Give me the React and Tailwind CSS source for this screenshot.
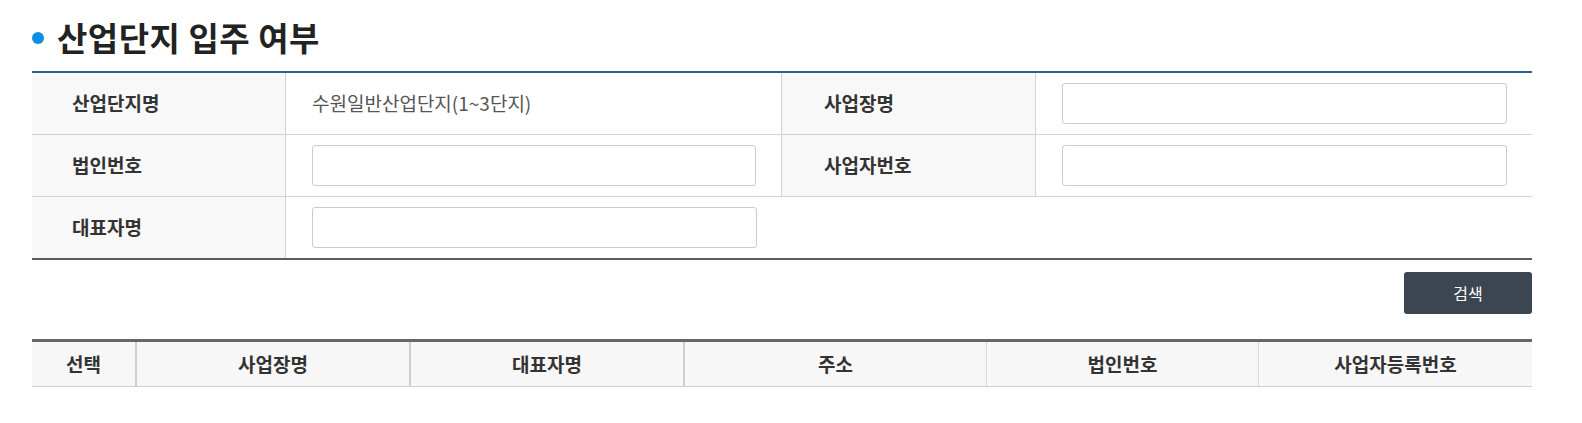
import React from "react";

const Field = () => (
  <input
    type="text"
    className="w-full h-[41px] border border-[#cccccc] rounded-[3px] bg-white px-3 outline-none"
  />
);

const App = () => {
  const cols = [
    { name: "선택", w: "w-[105px]", b: "border-r-2 border-[#cfcfcf]" },
    { name: "사업장명", w: "w-[274px]", b: "border-r-2 border-[#cfcfcf]" },
    { name: "대표자명", w: "w-[274px]", b: "border-r-2 border-[#cfcfcf]" },
    { name: "주소", w: "w-[302px]", b: "border-r border-[#dcdcdc]" },
    { name: "법인번호", w: "w-[272px]", b: "border-r border-[#dcdcdc]" },
    { name: "사업자등록번호", w: "flex-1", b: "" },
  ];

  return (
    <div
      className="bg-white w-full pl-[32px] pr-[50px] pt-[14px] pb-[20px] text-[#333]"
      style={{ fontFamily: '"Noto Sans CJK KR", "Noto Sans", sans-serif' }}
    >
      <h2 className="flex items-center h-[47px] text-[33px] font-bold text-[#222] tracking-[0.5px]">
        <span className="w-[12px] h-[12px] rounded-full bg-[#0d8ee0] mr-[13px]"></span>
        산업단지 입주 여부
      </h2>

      <div className="mt-[10px] border-t-2 border-[#2d5f8f] border-b-2 border-b-[#5c5c5c] text-[19px]">
        <div className="flex h-[62px] border-b border-[#d2d2d2]">
          <div className="w-[254px] bg-[#f8f8f8] border-r border-[#d2d2d2] pl-[40px] flex items-center font-semibold">
            산업단지명
          </div>
          <div className="w-[496px] border-r border-[#d2d2d2] pl-[26px] flex items-center text-[#555] font-normal">
            수원일반산업단지(1~3단지)
          </div>
          <div className="w-[254px] bg-[#f8f8f8] border-r border-[#d2d2d2] pl-[42px] flex items-center font-semibold">
            사업장명
          </div>
          <div className="flex-1 pl-[26px] pr-[25px] flex items-center">
            <Field />
          </div>
        </div>
        <div className="flex h-[62px] border-b border-[#d2d2d2]">
          <div className="w-[254px] bg-[#f8f8f8] border-r border-[#d2d2d2] pl-[40px] flex items-center font-semibold">
            법인번호
          </div>
          <div className="w-[496px] border-r border-[#d2d2d2] pl-[26px] pr-[25px] flex items-center">
            <Field />
          </div>
          <div className="w-[254px] bg-[#f8f8f8] border-r border-[#d2d2d2] pl-[42px] flex items-center font-semibold">
            사업자번호
          </div>
          <div className="flex-1 pl-[26px] pr-[25px] flex items-center">
            <Field />
          </div>
        </div>
        <div className="flex h-[61px]">
          <div className="w-[254px] bg-[#f8f8f8] border-r border-[#d2d2d2] pl-[40px] flex items-center font-semibold">
            대표자명
          </div>
          <div className="w-[496px] pl-[26px] pr-[25px] flex items-center">
            <Field />
          </div>
          <div className="flex-1"></div>
        </div>
      </div>

      <div className="flex justify-end mt-[12px]">
        <button className="w-[128px] h-[42px] bg-[#3b4651] rounded-[3px] text-white text-[16px]">
          검색
        </button>
      </div>

      <div className="mt-[25px] border-t-[3px] border-[#666666] border-b border-b-[#cfcfcf] flex h-[48px] bg-[#f7f7f7] text-[19px] font-semibold">
        {cols.map((c) => (
          <div key={c.name} className={`${c.w} ${c.b} flex items-center justify-center`}>
            {c.name}
          </div>
        ))}
      </div>
    </div>
  );
};

export default App;
